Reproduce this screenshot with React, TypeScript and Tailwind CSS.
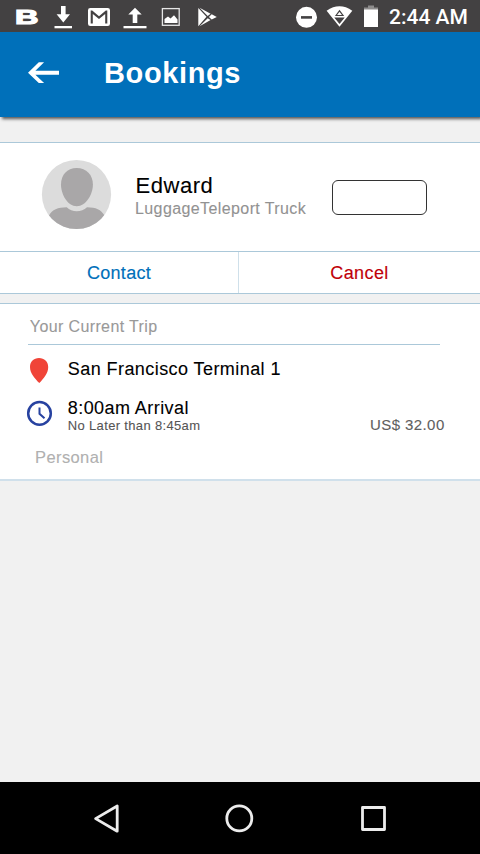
function StatusBar() {
  return (
    <div className="flex h-8 shrink-0 items-start bg-[#434142] text-white">
      <div className="ml-[15px] h-8 w-[24px]">
        <span className="block w-[15px] origin-left scale-x-[1.55] font-['Liberation_Sans',Arial,sans-serif] text-[21px] leading-[34px] font-bold [-webkit-text-stroke:1.2px_white]">
          B
        </span>
      </div>
      <svg className="h-8 w-[196px] shrink-0" viewBox="39 0 196 32" fill="currentColor">
        <path d="M61 6h4.600v8.200H70L63.300 22.500l-6.700-8.300H61z" />
        <path d="M54.500 26h17.500v2.300H54.500z" />
        <path
          fillRule="evenodd"
          d="M90.300 8h17.400a2.300 2.300 0 0 1 2.300 2.300v13.400a2.300 2.300 0 0 1-2.300 2.300H90.300a2.300 2.300 0 0 1-2.300-2.300V10.300A2.300 2.300 0 0 1 90.300 8zM90.700 10.600v12.900h2.100v-9.400l6.200 5 6.200-5v9.400h2.100V10.600h-1.500L99 16.200l-6.800-5.600z"
        />
        <path d="M132.700 23v-8.500h-4.400L135 7.800l6.700 6.700h-4.400V23z" />
        <path d="M123.500 26h23v2.300h-23z" />
        <rect x="162.400" y="8.600" width="16.800" height="16.700" fill="none" stroke="#e6e6e6" strokeWidth="1.300" />
        <path d="M164.500 23v-4l3.500-2.500 2.500 2 3.500-3.300 3.500 4.300V23z" />
        <path d="M198.300 8l8.200 8.700-8.200 9.500zM199.600 7.700l11 6-2.900 2.200zM199.600 26.300l8.100-8.100 2.900 1.800zM211.700 14.200l5.100 2.700-5.100 2.700-2.800-2.700z" />
      </svg>
      <svg className="ml-[59px] h-8 w-[88px] shrink-0" viewBox="294 0 88 32" fill="currentColor">
        <circle cx="306.500" cy="17.300" r="10.500" />
        <path d="M301 16.100h11v2.600h-11z" fill="#434142" />
        <path d="M326.600 10.700Q339.500 1.800 352.300 10.700L339.500 26.700z" />
        <g fill="none" stroke="#434142" strokeWidth="1.200">
          <path d="M336 15.500l3.500-4.700 3.500 4.700z" />
          <path d="M335.500 18h8l-4 5z" fill="#434142" />
        </g>
        <path d="M368 5.500h6v2h4V10h-14V7.500h4z" fill="#8d8c8c" />
        <path d="M364 9.500h14V27h-14z" />
      </svg>
      <span className="ml-[7px] whitespace-nowrap font-[Roboto,sans-serif] text-[21px] leading-[35px] font-medium">
        2:44 AM
      </span>
    </div>
  );
}

function Header() {
  return (
    <header className="relative z-10 flex h-[85px] shrink-0 items-start bg-[#0070ba] text-white shadow-[2px_2px_3px_#555]">
      <svg className="mt-[29px] ml-7 h-6 w-8" viewBox="28 61 32 24" fill="currentColor">
        <path d="M28 72.700L38.800 62.300h5.300L35.400 70.700H59v4H35.400l8.700 8.400h-5.300z" />
      </svg>
      <h1 className="mt-[20.500px] ml-[44px] text-[29px] leading-10 font-bold tracking-[0.620px]">Bookings</h1>
    </header>
  );
}

function Avatar() {
  return (
    <svg className="mt-[16px] ml-[41px] h-[71px] w-[71px] shrink-0" viewBox="41 159 71 71">
      <defs>
        <clipPath id="avatar-clip">
          <circle cx="76.500" cy="194.500" r="34.600" />
        </clipPath>
      </defs>
      <circle cx="76.500" cy="194.500" r="34.600" fill="#dcdcdc" />
      <g fill="#a9a7a8" clipPath="url(#avatar-clip)">
        <path d="M76.700 168C67 168 61 175 61 184.500C61 194.500 67.500 206.200 76.700 206.200S92.900 194.500 92.900 184.500C92.900 175 86.500 168 76.700 168z" />
        <path d="M49 215.500C52 209.500 58 207.500 66.700 207.300C72 212.500 81.500 212.500 87 207.300C96 207.500 101 209.500 104.500 215.500V231H49z" />
      </g>
    </svg>
  );
}

function ProviderCard() {
  return (
    <section className="mt-[25px] border-y border-[#abc8d9] bg-white">
      <div className="flex h-[108px] items-start">
        <Avatar />
        <div className="mt-[29px] ml-[23.500px] w-[196.500px] whitespace-nowrap [-webkit-text-stroke:0.1px_currentColor]">
          <p className="text-[22px] leading-[27px] tracking-[0.550px] text-black">Edward</p>
          <p className="-ml-[0.500px] text-[16px] leading-[19px] tracking-[0.400px] text-[#929292]">
            LuggageTeleport Truck
          </p>
        </div>
        <button aria-label="Status" className="mt-[37px] h-[35px] w-[95px] rounded-[6px] border border-[#333]" />
      </div>
      <div className="flex h-[42px] border-t border-[#abc8d9] text-[18px] leading-[42px] [-webkit-text-stroke:0.15px_currentColor]">
        <button className="w-[239px] border-r border-[#cfe0ea] tracking-[0.300px] text-[#0070ba]">Contact</button>
        <button className="flex-1 tracking-[0.400px] text-[#c00008]">Cancel</button>
      </div>
    </section>
  );
}

function TripCard() {
  return (
    <section className="mt-[9px] h-[178px] border-t border-b-2 border-t-[#abc8d9] border-b-[#d0e0eb] bg-white whitespace-nowrap [-webkit-text-stroke:0.1px_currentColor]">
      <h2 className="ml-7 h-[41px] w-[412px] border-b border-[#abc8d9] pl-[1.800px] text-[16px] leading-[45px] tracking-[0.380px] text-[#999]">
        Your Current Trip
      </h2>
      <div className="flex h-[46px] items-start">
        <svg className="mt-[12px] ml-7 h-7 w-[22px]" viewBox="28 357 22 28">
          <path
            d="M39 358c-5.300 0-9 3.700-9 8.900C30 373.500 35 378.500 39.300 383C43.500 378.500 48.200 373.500 48.200 366.900C48.200 361.700 44.300 358 39 358z"
            fill="#f04438"
          />
        </svg>
        <p className="mt-[12px] ml-[17.800px] text-[18px] leading-[24px] tracking-[0.430px] text-black">
          San Francisco Terminal 1
        </p>
      </div>
      <div className="flex h-[54px] items-start">
        <svg
          className="mt-[8px] ml-[26px] h-7 w-7"
          viewBox="26 399 28 28"
          fill="none"
          stroke="#2742a0"
          strokeWidth="2.500"
        >
          <circle cx="39.500" cy="413.400" r="11.300" />
          <path d="M39.500 407.500v6.200l5 4.500" strokeWidth="2" />
        </svg>
        <div className="mt-[5px] ml-[13.800px] w-[302.200px]">
          <p className="text-[18px] leading-[24px] tracking-[0.430px] text-black">8:00am Arrival</p>
          <p className="text-[13px] leading-[12px] tracking-[0.340px] text-[#555]">No Later than 8:45am</p>
        </div>
        <p className="mt-[24px] text-[15px] leading-[20px] tracking-[0.420px] text-[#606060]">US$ 32.00</p>
      </div>
      <p className="ml-[35px] text-[16.500px] leading-[25px] tracking-[0.400px] text-[#b0b0b0]">Personal</p>
    </section>
  );
}

function NavigationBar() {
  return (
    <nav className="h-[72px] shrink-0 bg-black">
      <svg className="h-[72px] w-[480px]" viewBox="0 782 480 72" fill="none" stroke="#ececec" strokeWidth="2.800">
        <path d="M117.200 806v25.200L95.600 818.600z" strokeLinejoin="round" />
        <circle cx="239.300" cy="818.400" r="12.500" />
        <rect x="362.500" y="807.500" width="22" height="22" strokeLinejoin="round" />
      </svg>
    </nav>
  );
}

export default function App() {
  return (
    <div className="flex h-[854px] w-[480px] flex-col overflow-hidden bg-[#f1f1f1] font-['Liberation_Sans',Arial,sans-serif]">
      <StatusBar />
      <Header />
      <main className="flex-1">
        <ProviderCard />
        <TripCard />
      </main>
      <NavigationBar />
    </div>
  );
}
